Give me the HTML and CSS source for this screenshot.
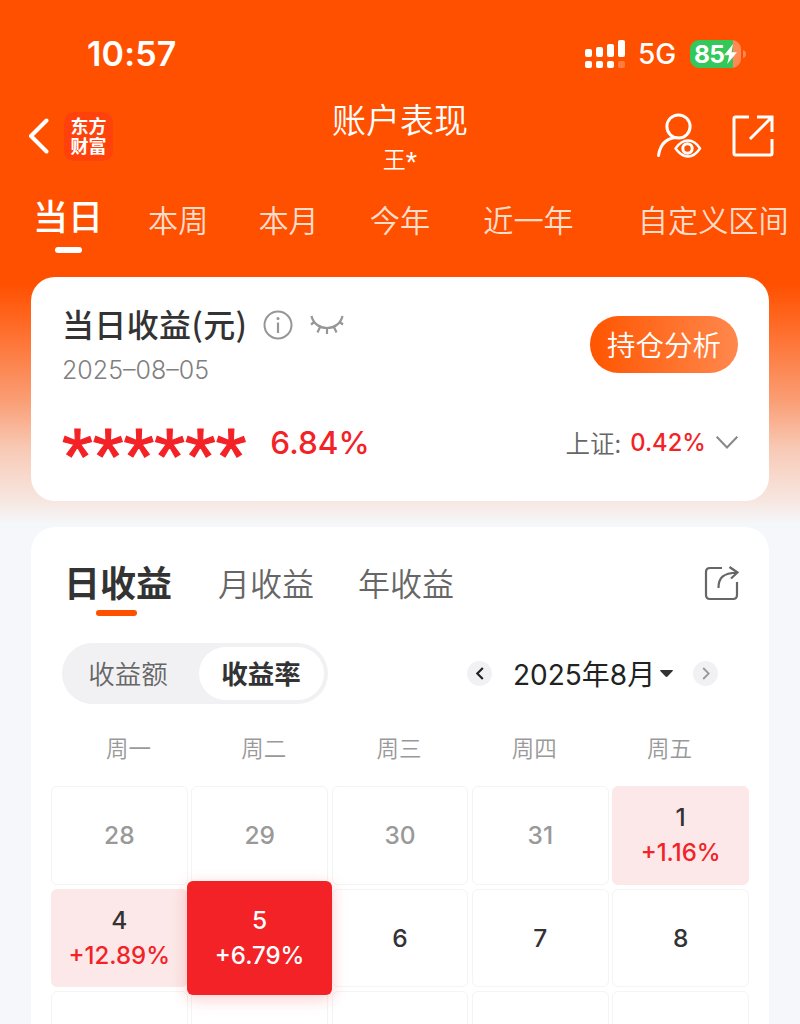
FILE: index.html
```html
<!DOCTYPE html>
<html lang="zh-CN">
<head>
<meta charset="utf-8">
<title>账户表现</title>
<link rel="stylesheet" href="styles.css">
</head>
<body>
<div class="screen">
  <div class="status">
    <span class="clock">10:57</span>
    <div class="status-right">
      <svg class="signal" width="40" height="28" viewBox="0 0 40 28" fill="#fff">
        <rect x="0" y="9" width="7" height="8" rx="2"/><rect x="11" y="7" width="7" height="10" rx="2"/><rect x="22" y="4" width="7" height="13" rx="2"/><rect x="33" y="0" width="7" height="17" rx="2"/>
        <rect x="0" y="21" width="7" height="7" rx="2"/><rect x="11" y="21" width="7" height="7" rx="2"/><rect x="22" y="21" width="7" height="7" rx="2"/><rect x="33" y="21" width="7" height="7" rx="2" opacity=".25"/>
      </svg>
      <span class="network">5G</span>
      <div class="battery">
        <span>85</span>
        <svg width="13" height="20" viewBox="0 0 13 22" preserveAspectRatio="none" fill="#fff"><path d="M9 0 0 12.5h5.2L3.2 22 13 9H7.6z"/></svg>
      </div>
      <svg class="battery-tip" width="3" height="8" viewBox="0 0 3 8"><path d="M0 0q3 1 3 4T0 8z" fill="#ff8a55"/></svg>
    </div>
  </div>

  <div class="nav">
    <svg class="back" width="22" height="36" viewBox="0 0 22 36" fill="none" stroke="#fff" stroke-width="4" stroke-linecap="round" stroke-linejoin="round"><path d="M19.500 2.500 4 18l15.500 15.500"/></svg>
    <div class="logo"><span>东方</span><span>财富</span></div>
    <div class="heading"><span class="title">账户表现</span><span class="user">王<i>*</i></span></div>
    <svg class="viewer" width="46" height="46" viewBox="0 0 46 46" fill="none" stroke="#fff" stroke-width="3" stroke-linecap="round">
      <circle cx="22.500" cy="13.500" r="11.600"/><path d="M2.500 42.500C4 32 10 25.500 20 24.500"/>
      <path d="M19.500 35.500Q25 27.500 32 27.500T44 35.500Q38.500 43.500 32 43.500T19.500 35.500Z" stroke-linejoin="round" stroke-width="2.500"/><circle cx="31.500" cy="35.500" r="4.700"/>
    </svg>
    <svg class="open" width="42" height="42" viewBox="0 0 42 42" fill="none" stroke="#fff" stroke-width="3"><path d="M17 2H3.500Q2 2 2 3.500v35Q2 40 3.500 40h35q1.500 0 1.500-1.500V24M25 2h15v15M39 3 18 24"/></svg>
  </div>

  <div class="periods">
    <span class="period active">当日</span><span class="period week">本周</span><span class="period month">本月</span><span class="period year">今年</span><span class="period recent">近一年</span><span class="period custom">自定义区间</span>
  </div>

  <section class="card summary">
    <div class="summary-top">
      <div>
        <div class="summary-title">
          <span>当日收益(元)</span>
          <svg class="info" width="30" height="30" viewBox="0 0 30 30" fill="none" stroke="#969696" stroke-width="2"><circle cx="15" cy="15" r="13.500"/><path d="M15 12.500V23" stroke-width="2.200"/><circle cx="15" cy="8.500" r="1.500" fill="#969696" stroke="none"/></svg>
          <svg class="eye" width="34" height="22" viewBox="0 0 34 22" fill="none" stroke="#969696" stroke-width="2.200"><path d="M1.500 2C5 18 29 18 32.500 2M1 10.500 5 7.500M33 10.500 29 7.500M7.500 18.500 10 13M17 20v-6M26.500 18.500 24 13"/></svg>
        </div>
        <div class="date">2025<i>–</i>08<i>–</i>05</div>
      </div>
      <div class="analyse">持仓分析</div>
    </div>
    <div class="summary-bottom">
      <span class="masked">******</span>
      <span class="rate">6.84%</span>
      <span class="index-name">上证:</span>
      <span class="index-rate">0.42%</span>
      <svg width="22" height="13" viewBox="0 0 22 13" fill="none" stroke="#888" stroke-width="2"><path d="m.7.700 10.300 10.800L21.300.700"/></svg>
    </div>
  </section>

  <section class="card calendar">
    <div class="views">
      <span class="view selected">日收益</span><span class="view monthly">月收益</span><span class="view yearly">年收益</span>
      <svg class="share" width="36" height="36" viewBox="0 0 36 36" fill="none" stroke="#666" stroke-width="2.200"><path d="M18 3H6Q2 3 2 7v23q0 4 4 4h23q4 0 4-4V17"/><path d="M14.500 23C14.500 13 19 8 33 7.500M25.500 2 33.500 7.500 27 13.500"/></svg>
    </div>
    <div class="controls">
      <div class="toggle"><span class="option">收益额</span><span class="option on">收益率</span></div>
      <div class="arrow prev"><svg width="8" height="13" viewBox="0 0 8 13" fill="none" stroke="#222" stroke-width="2.200"><path d="M6.800 1 1.300 6.500l5.500 5.500"/></svg></div>
      <span class="current"><b>2025</b>年<b>8</b>月</span>
      <svg class="caret" width="13" height="7" viewBox="0 0 13 7"><path d="M.5 0h12q.8.500 0 1.200L7.500 6.500q-1 .8-2 0L.5 1.200Q-.2.500.5 0z" fill="#333"/></svg>
      <div class="arrow next"><svg width="8" height="13" viewBox="0 0 8 13" fill="none" stroke="#999" stroke-width="1.800"><path d="m1.200 1 5.500 5.500L1.200 12"/></svg></div>
    </div>
    <div class="weekdays"><span>周一</span><span>周二</span><span>周三</span><span>周四</span><span>周五</span></div>
    <div class="days">
      <div class="day past">28</div><div class="day past">29</div><div class="day past">30</div><div class="day past">31</div>
      <div class="day gain">1<em>+1.16%</em></div>
      <div class="day gain">4<em>+12.89%</em></div>
      <div class="day today">5<em>+6.79%</em></div>
      <div class="day">6</div><div class="day">7</div><div class="day">8</div>
      <div class="day"></div><div class="day"></div><div class="day"></div><div class="day"></div><div class="day"></div>
    </div>
  </section>
</div>
</body>
</html>
```
FILE: styles.css
```css
* { box-sizing: border-box; }
body { margin: 0; }
svg { display: block; flex: none; }
.screen {
  width: 800px; height: 1024px; overflow: hidden;
  display: flex; flex-direction: column;
  font-family: "Noto Sans CJK SC", sans-serif;
  white-space: nowrap; color: #333;
  background: linear-gradient(#ff5000 284px, #ff6a26 325px, #fa9d74 400px, #f8cab7 450px, #f7e6e0 500px, #f5f7fa 524px);
}
.status, .nav, .periods, .card { flex: none; }
.status { height: 96px; padding: 11px 54px 0 87px; display: flex; align-items: center; justify-content: space-between; color: #fff; font-family: Inter, sans-serif; }
.clock { font-size: 34px; font-weight: 600; letter-spacing: .2px; }
.status-right { display: flex; align-items: center; }
.network { font-size: 28px; font-weight: 450; margin-left: 13px; width: 52px; }
.battery { width: 51px; height: 28px; border-radius: 9px; background: linear-gradient(90deg, #34c759 43px, #ff8a55 43px); display: flex; align-items: center; padding-left: 4px; font-size: 24.500px; font-weight: 700; letter-spacing: -.8px; }
.battery-tip { margin-left: 2px; }

.nav { height: 84px; display: flex; align-items: center; padding: 0 0 4px 27px; color: #fff; }
.logo { width: 49px; height: 49px; margin-left: 15px; border-radius: 10px; background: #ff420c; display: flex; flex-direction: column; align-items: center; justify-content: center; font-size: 18px; line-height: 20px; font-weight: 700; padding-bottom: 2px; }
.heading { width: 200px; margin-left: 187px; display: flex; flex-direction: column; align-items: center; padding-bottom: 3px; }
.title { font-size: 34px; line-height: 46px; font-weight: 350; }
.user { font-size: 23px; line-height: 32px; font-weight: 350; }
.user i { font: 400 29px/20px "Liberation Sans", sans-serif; vertical-align: -4px; }
.viewer { margin-left: 156px; }
.open { margin-left: 30px; }

.periods { height: 97px; padding: 7px 0 0 33px; display: flex; color: #ffddcc; font-size: 30.200px; line-height: 65px; font-weight: 350; }
.period.active { color: #fff; font-size: 35px; line-height: 55px; font-weight: 500; display: flex; flex-direction: column; align-items: center; }
.period.active::after { content: ""; width: 27px; height: 6px; border-radius: 3px; background: #fff; margin-top: 5px; }
.week { margin-left: 45px; }
.month { margin-left: 50px; }
.year { margin-left: 51px; }
.recent { margin-left: 53px; }
.custom { margin-left: 64px; }

.card { margin: 0 31px; background: #fff; border-radius: 24px; }
.summary { height: 224px; padding: 23px 31px 0; }
.summary-top { display: flex; justify-content: space-between; height: 100px; }
.summary-title { display: flex; align-items: center; font-size: 32px; line-height: 46px; font-weight: 500; letter-spacing: .35px; }
.info { margin: 4px 0 0 16px; }
.eye { margin: 4px 0 0 17px; }
.date { font-family: Inter, sans-serif; font-weight: 300; font-size: 25px; line-height: 30px; margin-top: 9px; color: #808080; }
.date i { font-style: normal; }
.analyse { width: 148px; height: 57px; margin-top: 16px; border-radius: 29px; background: linear-gradient(90deg, #ff5500, #ff884d); color: #fff; font-size: 28.500px; line-height: 56px; text-align: center; font-weight: 350; }
.summary-bottom { display: flex; align-items: center; height: 84px; color: #f32226; font-family: Inter, sans-serif; }
.masked { font-family: "Liberation Sans", sans-serif; font-size: 79px; line-height: 84px; height: 84px; padding-top: 15px; width: 209px; -webkit-text-stroke: 1.200px #f32226; }
.rate { font-size: 31.500px; font-weight: 450; width: 296px; }
.index-name { font-family: "Noto Sans CJK SC", sans-serif; font-size: 24.500px; font-weight: 350; color: #666; width: 65px; }
.index-rate { font-size: 23.700px; font-weight: 500; width: 86px; }

.calendar { margin-top: 26px; height: 520px; padding: 27px 20px 0; border-radius: 24px 24px 0 0; }
.views { display: flex; height: 88px; padding: 0 9px 0 13px; font-size: 32px; line-height: 56px; font-weight: 350; color: #666; }
.selected { font-size: 36px; line-height: 54px; font-weight: 700; color: #333; display: flex; flex-direction: column; align-items: center; }
.selected::after { content: ""; width: 41px; height: 6px; border-radius: 3px; background: #ff5000; margin: 2px 3px 0 0; }
.monthly { margin-left: 46px; }
.yearly { margin-left: 44px; }
.share { margin: 11px 0 0 auto; }
.controls { display: flex; align-items: center; height: 62px; padding-left: 11px; }
.toggle { display: flex; width: 266px; height: 61px; border-radius: 31px; background: #f1f1f4; padding: 4px; }
.option { width: 125px; text-align: center; font-size: 26.500px; line-height: 52px; font-weight: 350; color: #666; }
.option:first-child { width: 133px; padding-right: 9px; }
.option.on { border-radius: 27px; background: #fff; color: #333; font-weight: 700; padding-right: 1px; }
.arrow { width: 25px; height: 25px; border-radius: 50%; background: #f1f1f4; display: flex; align-items: center; justify-content: center; }
.prev { margin-left: 139px; }
.current { margin-left: 21px; font-size: 28px; color: #222; width: 147px; }
.current b { font-family: Inter, sans-serif; font-weight: 400; font-size: 28px; }
.next { margin-left: 20px; }
.weekdays { display: grid; grid-template-columns: repeat(5, 135.250px); padding-left: 10px; height: 82px; line-height: 87px; text-align: center; font-size: 22.500px; font-weight: 350; color: #999; }
.days { display: grid; grid-template-columns: repeat(5, 136.600px); grid-auto-rows: 98.500px; gap: 4px 3.750px; font-family: Inter, sans-serif; font-size: 24.500px; line-height: 36px; font-weight: 500; color: #333; }
.day { border: 1px solid #f4f4f4; border-radius: 6px; display: flex; flex-direction: column; align-items: center; justify-content: center; }
.day em { font-style: normal; color: #f32226; font-size: 24px; }
.past { color: #999; }
.gain { background: #fce8e8; border-color: #fce8e8; }
.today { margin: -8px -4px; background: #f32226; border: 0; color: #fff; box-shadow: 0 4px 16px rgba(243, 34, 38, .22); z-index: 1; }
.today em { color: #fff; }
```
